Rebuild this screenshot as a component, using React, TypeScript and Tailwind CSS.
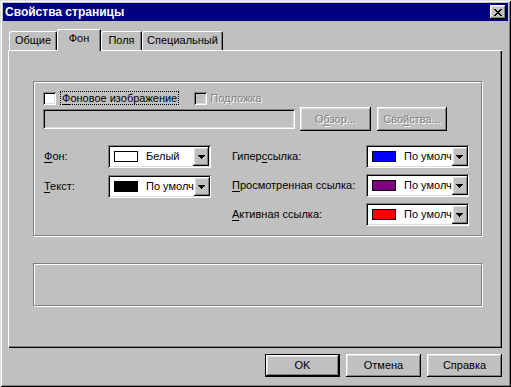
import React from "react";

const raised =
  "shadow-[inset_-1px_-1px_0_#000,inset_1px_1px_0_#fff,inset_-2px_-2px_0_#808080,inset_2px_2px_0_#dfdfdf]";
const sunken =
  "shadow-[inset_1px_1px_0_#808080,inset_-1px_-1px_0_#fff,inset_2px_2px_0_#000,inset_-2px_-2px_0_#dfdfdf]";
const etched = "border border-[#808080] shadow-[inset_1px_1px_0_#fff,1px_1px_0_#fff]";
const disabledText = "text-[#808080] [text-shadow:1px_1px_0_#fff]";

function U({ children }: { children: React.ReactNode }) {
  return <span className="underline underline-offset-[2px]">{children}</span>;
}

function CloseGlyph() {
  return (
    <svg width="8" height="7" viewBox="0 0 8 7" shapeRendering="crispEdges">
      <path
        fill="#000"
        d="M0 0h2v1H0zM6 0h2v1H6zM1 1h2v1H1zM5 1h2v1H5zM2 2h4v1H2zM3 3h2v1H3zM2 4h4v1H2zM1 5h2v1H1zM5 5h2v1H5zM0 6h2v1H0zM6 6h2v1H6z"
      />
    </svg>
  );
}

function Arrow() {
  return (
    <svg width="7" height="4" viewBox="0 0 7 4" shapeRendering="crispEdges">
      <path fill="#000" d="M0 0h7v1H0zM1 1h5v1H1zM2 2h3v1H2zM3 3h1v1H3z" />
    </svg>
  );
}

function Combo({ color, text }: { color: string; text: string }) {
  return (
    <div className={`w-[103px] h-[23px] p-[2px] bg-white shrink-0 ${sunken}`}>
      <div className="flex h-full items-center bg-white">
        <div className="ml-[4px] w-[24px] h-[11px] border border-black shrink-0" style={{ background: color }} />
        <div className="ml-[8px] whitespace-nowrap text-[11px] leading-none text-black">{text}</div>
        <div className={`ml-auto w-[16px] h-full flex items-center justify-center bg-[#c0c0c0] shrink-0 ${raised}`}>
          <Arrow />
        </div>
      </div>
    </div>
  );
}

function Tab({
  label,
  width,
  selected,
}: {
  label: string;
  width: string;
  selected?: boolean;
}) {
  return (
    <div
      className={`${width} ${
        selected ? "h-[22px] -mb-[1px] z-10 pb-[4px]" : "h-[19px] pb-[1px]"
      } relative bg-[#c0c0c0] rounded-t-[2px] flex items-center justify-center whitespace-nowrap text-[11px] leading-none shadow-[inset_1px_1px_0_#fff,inset_-1px_0_0_#000,inset_-2px_0_0_#808080]`}
    >
      {label}
    </div>
  );
}

export default function App() {
  return (
    <div
      className="w-[511px] h-[387px] p-[3px] flex flex-col bg-[#c0c0c0] text-black shadow-[inset_1px_1px_0_#dfdfdf,inset_-1px_-1px_0_#000,inset_2px_2px_0_#fff,inset_-2px_-2px_0_#808080]"
      style={{ fontFamily: '"Liberation Sans", Arial, sans-serif' }}
    >
      {/* Title bar */}
      <div className="h-[18px] bg-[#000080] flex items-center justify-between pl-[2px] pr-[2px]">
        <span className="text-white font-bold text-[12px] leading-none">Свойства страницы</span>
        <div className={`w-[16px] h-[14px] bg-[#c0c0c0] flex items-center justify-center ${raised}`}>
          <CloseGlyph />
        </div>
      </div>

      {/* Body */}
      <div className="pl-[5px] pr-[6px] flex flex-col">
        {/* Tabs */}
        <div className="mt-[8px] h-[21px] flex items-end pl-[1px]">
          <Tab label="Общие" width="w-[48px]" />
          <Tab label="Фон" width="w-[44px]" selected />
          <Tab label="Поля" width="w-[41px]" />
          <Tab label="Специальный" width="w-[81px]" />
        </div>

        {/* Panel */}
        <div className="w-[494px] h-[298px] pt-[31px] pl-[25px] shadow-[inset_1px_1px_0_#fff,inset_-1px_-1px_0_#000,inset_-2px_-2px_0_#808080]">
          {/* Group 1 */}
          <div className={`w-[449px] h-[155px] pt-[9px] pl-[9px] text-[11px] leading-none whitespace-nowrap ${etched}`}>
            {/* Checkboxes */}
            <div className="flex items-center h-[14px]">
              <div className={`w-[13px] h-[13px] bg-white ${sunken}`} />
              <div className="ml-[4px] h-[14px] px-[2px] flex items-center outline outline-1 outline-dotted outline-black -outline-offset-1">
                <span>
                  <U>Ф</U>оновое изображение
                </span>
              </div>
              <div className={`ml-[15px] w-[13px] h-[13px] bg-[#c0c0c0] ${sunken}`} />
              <span className={`ml-[3px] ${disabledText}`}>Подложка</span>
            </div>

            {/* Input + buttons */}
            <div className="mt-[2px] flex items-center h-[24px]">
              <div className={`w-[252px] h-[20px] bg-[#c0c0c0] ${sunken}`} />
              <div className={`ml-[5px] w-[71px] h-[24px] flex items-center justify-center ${raised} ${disabledText}`}>
                <span>
                  О<U>б</U>зор...
                </span>
              </div>
              <div className={`ml-[6px] w-[70px] h-[24px] flex items-center justify-center ${raised} ${disabledText}`}>
                <span>
                  Сво<U>й</U>ства...
                </span>
              </div>
            </div>

            {/* Color rows */}
            <div className="mt-[14px] flex">
              <div className="flex flex-col gap-[7px]">
                <div className="flex items-center">
                  <span className="w-[65px] pl-[1px]">
                    <U>Ф</U>он:
                  </span>
                  <Combo color="#ffffff" text="Белый" />
                </div>
                <div className="flex items-center">
                  <span className="w-[65px] pl-[1px]">
                    <U>Т</U>екст:
                  </span>
                  <Combo color="#000000" text="По умолч" />
                </div>
              </div>
              <div className="ml-[21px] flex flex-col gap-[6px]">
                <div className="flex items-center">
                  <span className="w-[134px]">
                    Гипер<U>с</U>сылка:
                  </span>
                  <Combo color="#0000ff" text="По умолч" />
                </div>
                <div className="flex items-center">
                  <span className="w-[134px]">
                    <U>П</U>росмотренная ссылка:
                  </span>
                  <Combo color="#800080" text="По умолч" />
                </div>
                <div className="flex items-center">
                  <span className="w-[134px]">
                    <U>А</U>ктивная ссылка:
                  </span>
                  <Combo color="#ff0000" text="По умолч" />
                </div>
              </div>
            </div>
          </div>

          {/* Group 2 */}
          <div className={`mt-[27px] w-[449px] h-[43px] ${etched}`} />
        </div>

        {/* Buttons */}
        <div className="mt-[6px] flex justify-end gap-[6px] text-[11px] leading-none">
          <div className="w-[75px] h-[23px] border border-black">
            <div className={`w-full h-full flex items-center justify-center ${raised}`}>OK</div>
          </div>
          <div className={`w-[75px] h-[23px] flex items-center justify-center ${raised}`}>Отмена</div>
          <div className={`w-[75px] h-[23px] flex items-center justify-center ${raised}`}>Справка</div>
        </div>
      </div>
    </div>
  );
}
